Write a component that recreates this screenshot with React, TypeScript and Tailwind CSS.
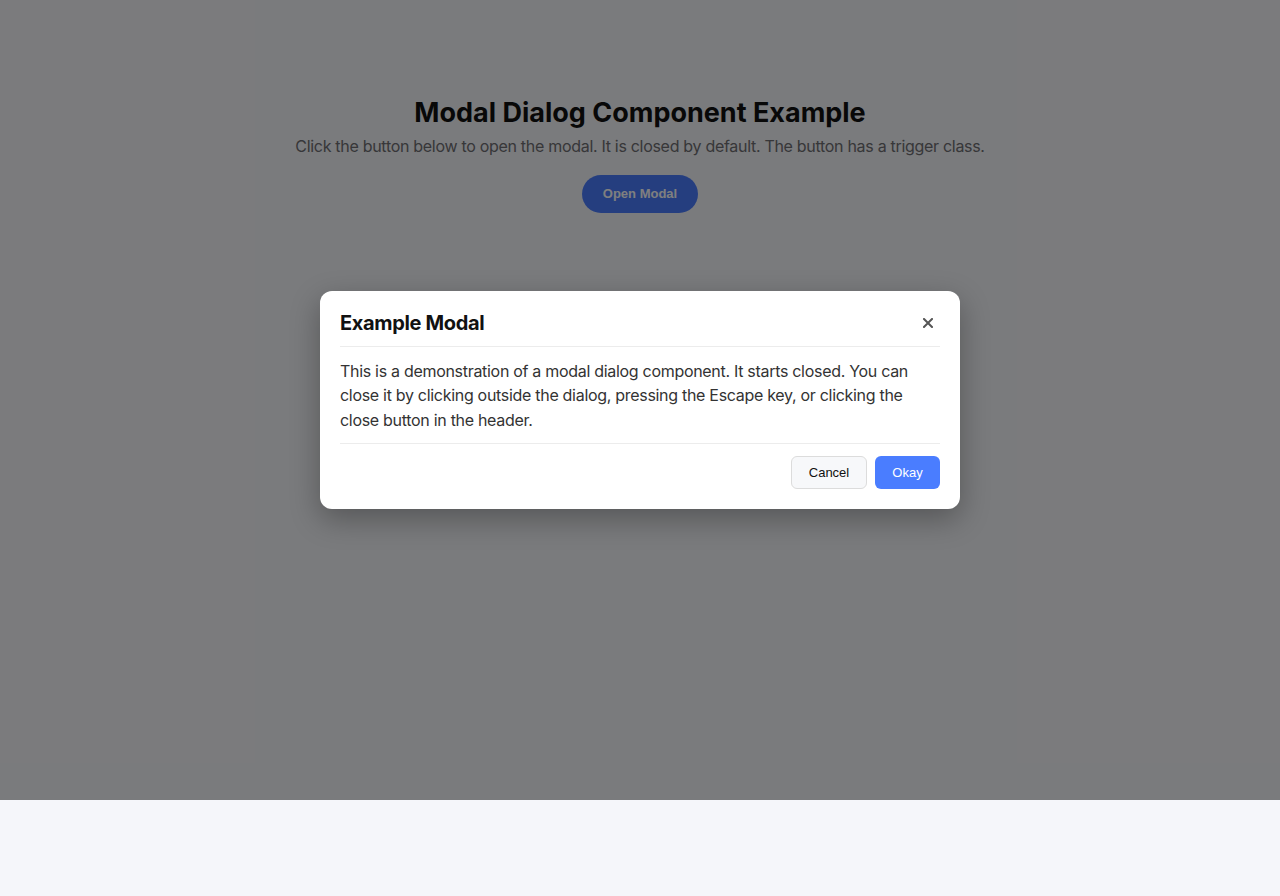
import React from "react";

export default function App() {
  return (
    <div
      className="relative min-h-[896px] bg-[#f5f6fa] text-[#111]"
      style={{ fontFamily: "Inter, 'Noto Sans', sans-serif" }}
    >
      {/* Page content */}
      <main className="flex flex-col items-center pt-[97px]">
        <h1 className="text-[27px] leading-[32px] font-bold text-[#111]">
          Modal Dialog Component Example
        </h1>
        <p className="mt-[5px] text-[16px] leading-[24px] tracking-[-0.3px] text-[#6e6e72]">
          Click the button below to open the modal. It is closed by default. The button has a trigger class.
        </p>
        <button
          className="trigger mt-[17px] h-[38px] w-[116px] rounded-full bg-[#4a7dff] text-[13px] font-bold text-white"
          style={{ fontFamily: "'Liberation Sans', Arial, sans-serif" }}
        >
          Open Modal
        </button>
      </main>

      {/* Overlay + dialog */}
      <div className="absolute left-0 top-0 flex h-[800px] w-full items-center justify-center bg-black/50">
        <div
          role="dialog"
          className="w-[640px] rounded-[12px] bg-white px-5 pb-5 pt-5 shadow-[0_10px_30px_rgba(0,0,0,0.3)]"
        >
          <div className="flex items-center justify-between border-b border-[#ececec] pb-[11px]">
            <h2 className="text-[20px] leading-[24px] font-bold tracking-[-0.35px] text-[#111]">Example Modal</h2>
            <button className="flex h-6 w-6 items-center justify-center text-[#555]" aria-label="Close">
              <svg width="10" height="10" viewBox="0 0 10 10">
                <path d="M1 1L9 9M9 1L1 9" stroke="#555" strokeWidth="2" strokeLinecap="square" />
              </svg>
            </button>
          </div>
          <p className="pb-[11px] pt-3 text-[16px] leading-[24.5px] tracking-[-0.3px] text-[#333]">
            This is a demonstration of a modal dialog component. It starts closed. You can close it by clicking
            outside the dialog, pressing the Escape key, or clicking the close button in the header.
          </p>
          <div
            className="flex justify-end gap-2 border-t border-[#ececec] pt-3"
            style={{ fontFamily: "'Liberation Sans', Arial, sans-serif" }}
          >
            <button className="h-[33px] w-[76px] rounded-[6px] border border-[#dcdcdc] bg-[#f7f8fa] text-[13px] text-[#111]">
              Cancel
            </button>
            <button className="h-[33px] w-[65px] rounded-[6px] bg-[#4a7dff] text-[13px] text-white">
              Okay
            </button>
          </div>
        </div>
      </div>
    </div>
  );
}
